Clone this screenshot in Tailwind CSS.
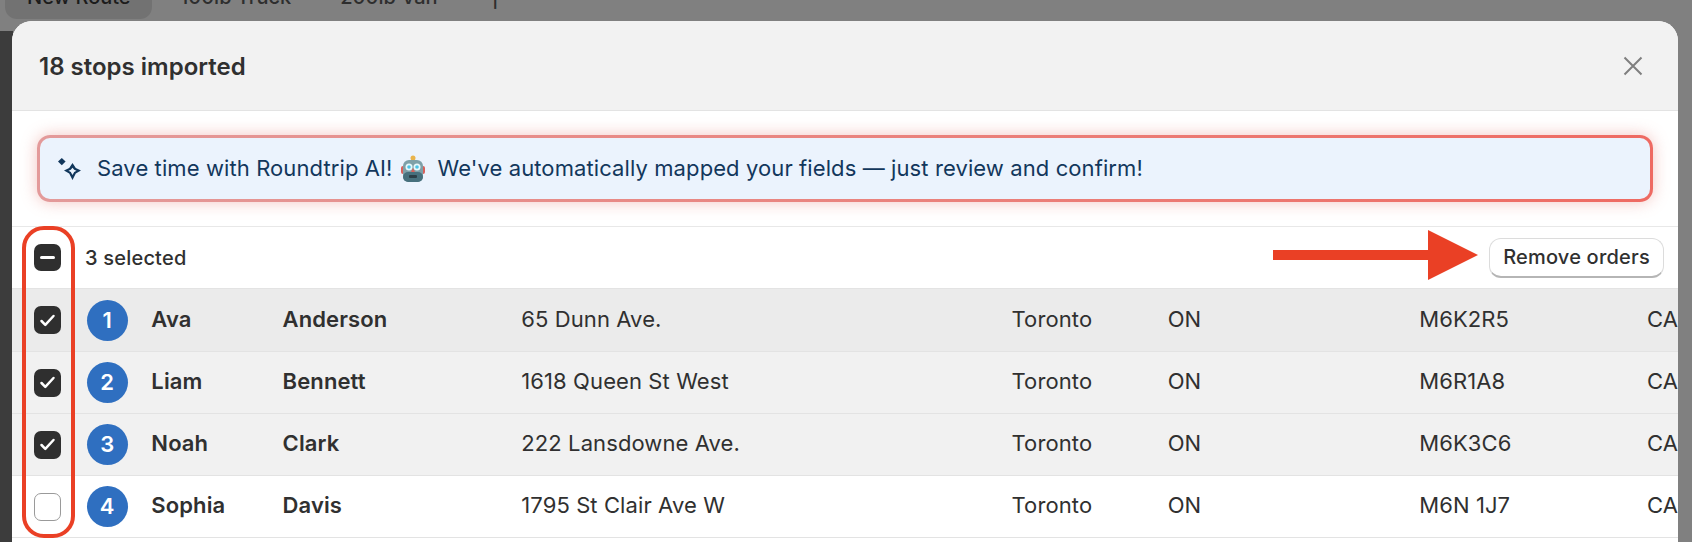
<!DOCTYPE html>
<html lang="en">
<head>
    <meta charset="UTF-8">
    <title>Stops imported</title>
    <script src="https://cdn.jsdelivr.net/npm/@tailwindcss/browser@4"></script>
</head>
<body class="bg-[#808080] font-['Inter',sans-serif] text-[#303030]">
<div class="relative w-[1692px] h-[542px] overflow-hidden">

    <!-- page behind the modal -->
    <div class="absolute inset-x-0 top-0 h-[31px] bg-[#808080] flex items-start pl-[5px] text-[#2e2e2e] text-[20px] font-medium">
        <div class="w-[147px] h-[19px] rounded-b-[12px] bg-[#727272] flex items-end pl-[22px] leading-none pb-[12px] text-[#1c1c1c]">New Route</div>
        <div class="h-[19px] ml-[28px] flex items-end leading-none pb-[12px]">100lb Truck</div>
        <div class="h-[19px] ml-[49px] flex items-end leading-none pb-[12px]">200lb Van</div>
        <div class="h-[19px] ml-[54px] flex items-end leading-none pb-[12px]">|</div>
    </div>
    <div class="absolute left-0 top-[31px] bottom-0 w-[13px] bg-[#3c3c3c]"></div>

    <!-- modal -->
    <div class="relative mt-[21px] ml-[12px] w-[1666px] h-[521px] bg-white rounded-t-[20px] overflow-hidden">
        <div class="h-[90px] bg-[#f2f2f2] border-b border-[#e3e3e3] flex items-center justify-between pl-[27px] pr-[35px]">
            <h2 class="text-[24px] font-semibold leading-none pt-[2px]">18 stops imported</h2>
            <svg class="w-[20px] h-[20px]" viewBox="0 0 20 20" fill="none" stroke="#7f7f7f" stroke-width="2"><path d="M1.5 1.5l17 17M18.5 1.5l-17 17"/></svg>
        </div>

        <div class="h-[116px] border-b border-[#e8e8e8] pl-[25px] pr-[25px] pt-[24px]">
            <div class="h-[67px] p-[3px] rounded-[13px] bg-linear-to-r from-[#e39a9a] to-[#ee6a62] shadow-[0_0_16px_rgba(225,110,100,0.4)]">
                <div class="h-full flex items-center pl-[18px] rounded-[10px] bg-[#ebf3fd] text-[#12375c] text-[22px] tracking-[0.1px]">
                    <svg class="w-[23px] h-[22px] mr-[16px] shrink-0" viewBox="0 0 23 22" fill="#12375c">
                        <path d="M3.800 0l3.800 3.600-3.800 3.600L0 3.600z"/>
                        <path fill-rule="evenodd" d="M14.500 5l3.300 5 5.200 2.500-5.200 3-3.300 6.500-3.300-6.500-5.200-3 5.200-2.500zm0 4.800l-1.700 2-2.300 1 2.300 1.200 1.700 3 1.700-3 2.300-1.200-2.300-1z"/>
                    </svg>
                    <span>Save time with Roundtrip AI!</span>
                    <svg class="w-[24px] h-[27px] ml-[9px] mr-[12px] shrink-0" viewBox="0 0 24 27">
                        <circle cx="12" cy="3" r="2.500" fill="#e9b44c"/>
                        <rect x="0" y="11" width="4" height="8" rx="2" fill="#d9605a"/>
                        <rect x="20" y="11" width="4" height="8" rx="2" fill="#d9605a"/>
                        <rect x="2" y="5" width="20" height="22" rx="6" fill="#7ea0a8"/>
                        <rect x="2" y="17" width="20" height="10" rx="5" fill="#47707d"/>
                        <circle cx="8" cy="12" r="3.500" fill="#e6f7fb"/><circle cx="8" cy="12" r="1.800" fill="#4cc3e6"/>
                        <circle cx="16" cy="12" r="3.500" fill="#e6f7fb"/><circle cx="16" cy="12" r="1.800" fill="#4cc3e6"/>
                        <path d="M12 13l2 4h-4z" fill="#d9605a"/>
                        <rect x="8" y="20" width="8" height="3" rx="1" fill="#2b3f48"/>
                    </svg>
                    <span>We've automatically mapped your fields — just review and confirm!</span>
                </div>
            </div>
        </div>

        <div class="h-[62px] flex items-center justify-between border-b border-[#e3e3e3] pl-[22px] pr-[14px]">
            <div class="flex items-center text-[20px] font-medium tracking-[0.2px]">
                <div class="w-[27px] h-[27px] rounded-[7px] bg-[#2f2f2f] flex items-center justify-center"><div class="w-[15px] h-[3px] rounded-full bg-white"></div></div>
                <span class="ml-[24px]">3 selected</span>
            </div>
            <button class="w-[175px] h-[40px] bg-white rounded-[12px] border border-[#dcdcdc] border-b-2 border-b-[#b5b5b5] text-[20px] font-medium tracking-[0.2px]">Remove orders</button>
        </div>

        <div class="h-[63px] bg-[#ebebeb] border-b border-[#e3e3e3] flex items-center text-[22px] tracking-[0.1px] whitespace-nowrap">
            <div class="w-[75px] pl-[22px]">
                <div class="w-[27px] h-[28px] rounded-[7px] bg-[#2f2f2f] flex items-center justify-center"><svg class="w-[19px] h-[17px]" viewBox="0 0 19 17" fill="none" stroke="#fff" stroke-width="2.500" stroke-linecap="round" stroke-linejoin="round"><path d="M3.500 9l3.800 3.800L15.500 4"/></svg></div>
            </div>
            <div class="w-[65px]"><div class="w-[41px] h-[41px] rounded-full bg-[#2f6fc0] text-white font-semibold flex items-center justify-center">1</div></div>
            <div class="w-[132px] font-semibold pb-[2px]">Ava</div>
            <div class="w-[240px] font-semibold pb-[2px]">Anderson</div>
            <div class="w-[493px] pb-[2px]">65 Dunn Ave.</div>
            <div class="w-[157px] pb-[2px]">Toronto</div>
            <div class="w-[253px] pb-[2px]">ON</div>
            <div class="w-[229px] pb-[2px]">M6K2R5</div>
            <div class="pb-[2px]">CA</div>
        </div>
        <div class="h-[62px] bg-[#f1f1f1] border-b border-[#e3e3e3] flex items-center text-[22px] tracking-[0.1px] whitespace-nowrap">
            <div class="w-[75px] pl-[22px]">
                <div class="w-[27px] h-[28px] rounded-[7px] bg-[#2f2f2f] flex items-center justify-center"><svg class="w-[19px] h-[17px]" viewBox="0 0 19 17" fill="none" stroke="#fff" stroke-width="2.500" stroke-linecap="round" stroke-linejoin="round"><path d="M3.500 9l3.800 3.800L15.500 4"/></svg></div>
            </div>
            <div class="w-[65px]"><div class="w-[41px] h-[41px] rounded-full bg-[#2f6fc0] text-white font-semibold flex items-center justify-center">2</div></div>
            <div class="w-[132px] font-semibold pb-[2px]">Liam</div>
            <div class="w-[240px] font-semibold pb-[2px]">Bennett</div>
            <div class="w-[493px] pb-[2px]">1618 Queen St West</div>
            <div class="w-[157px] pb-[2px]">Toronto</div>
            <div class="w-[253px] pb-[2px]">ON</div>
            <div class="w-[229px] pb-[2px]">M6R1A8</div>
            <div class="pb-[2px]">CA</div>
        </div>
        <div class="h-[62px] bg-[#f1f1f1] border-b border-[#e3e3e3] flex items-center text-[22px] tracking-[0.1px] whitespace-nowrap">
            <div class="w-[75px] pl-[22px]">
                <div class="w-[27px] h-[28px] rounded-[7px] bg-[#2f2f2f] flex items-center justify-center"><svg class="w-[19px] h-[17px]" viewBox="0 0 19 17" fill="none" stroke="#fff" stroke-width="2.500" stroke-linecap="round" stroke-linejoin="round"><path d="M3.500 9l3.800 3.800L15.500 4"/></svg></div>
            </div>
            <div class="w-[65px]"><div class="w-[41px] h-[41px] rounded-full bg-[#2f6fc0] text-white font-semibold flex items-center justify-center">3</div></div>
            <div class="w-[132px] font-semibold pb-[2px]">Noah</div>
            <div class="w-[240px] font-semibold pb-[2px]">Clark</div>
            <div class="w-[493px] pb-[2px]">222 Lansdowne Ave.</div>
            <div class="w-[157px] pb-[2px]">Toronto</div>
            <div class="w-[253px] pb-[2px]">ON</div>
            <div class="w-[229px] pb-[2px]">M6K3C6</div>
            <div class="pb-[2px]">CA</div>
        </div>
        <div class="h-[62px] bg-white border-b border-[#e3e3e3] flex items-center text-[22px] tracking-[0.1px] whitespace-nowrap">
            <div class="w-[75px] pl-[22px]">
                <div class="w-[27px] h-[28px] rounded-[7px] bg-white border border-[#9a9a9a]"></div>
            </div>
            <div class="w-[65px]"><div class="w-[41px] h-[41px] rounded-full bg-[#2f6fc0] text-white font-semibold flex items-center justify-center">4</div></div>
            <div class="w-[132px] font-semibold pb-[2px]">Sophia</div>
            <div class="w-[240px] font-semibold pb-[2px]">Davis</div>
            <div class="w-[493px] pb-[2px]">1795 St Clair Ave W</div>
            <div class="w-[157px] pb-[2px]">Toronto</div>
            <div class="w-[253px] pb-[2px]">ON</div>
            <div class="w-[229px] pb-[2px]">M6N 1J7</div>
            <div class="pb-[2px]">CA</div>
        </div>
    </div>

    <!-- red annotations on top of the screenshot -->
    <div class="absolute left-[22px] top-[226px] w-[53px] h-[312px] rounded-[22px] border-[4px] border-[#ea4025]"></div>
    <svg class="absolute left-[1273px] top-[230px] w-[206px] h-[50px]" viewBox="0 0 206 50" fill="#ea4025"><path d="M0 20h155V0l50 25-50 25V30H0z"/></svg>
</div>
</body>
</html>
